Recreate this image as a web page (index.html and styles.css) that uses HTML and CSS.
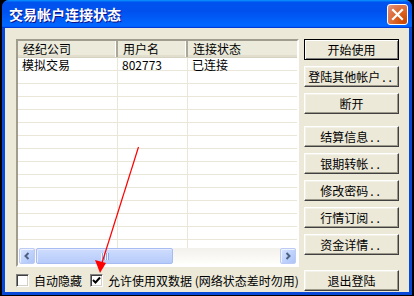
FILE: index.html
```html
<!DOCTYPE html>
<html lang="zh-CN">
<head>
  <meta charset="UTF-8">
  <title>交易帐户连接状态</title>
  <link rel="stylesheet" href="styles.css">
</head>
<body>
  <div class="window">
    <div class="titlebar">
      <span class="title">交易帐户连接状态</span>
      <span class="close-btn">
        <svg width="13" height="13" viewBox="0 0 13 13"><path d="M2 2 L11 11 M11 2 L2 11" stroke="#fff" stroke-width="2.2" stroke-linecap="square"/></svg>
      </span>
    </div>
    <div class="client">
      <div class="list">
        <div class="list-head">
          <div class="hcell">经纪公司</div>
          <div class="hcell">用户名</div>
          <div class="hcell last">连接状态</div>
        </div>
        <div class="list-body">
          <div class="row"><div class="cell">模拟交易</div><div class="cell">802773</div><div class="cell">已连接</div></div>
          <div class="row"><div class="cell"></div><div class="cell"></div><div class="cell"></div></div>
          <div class="row"><div class="cell"></div><div class="cell"></div><div class="cell"></div></div>
          <div class="row"><div class="cell"></div><div class="cell"></div><div class="cell"></div></div>
          <div class="row"><div class="cell"></div><div class="cell"></div><div class="cell"></div></div>
          <div class="row"><div class="cell"></div><div class="cell"></div><div class="cell"></div></div>
          <div class="row"><div class="cell"></div><div class="cell"></div><div class="cell"></div></div>
          <div class="row"><div class="cell"></div><div class="cell"></div><div class="cell"></div></div>
          <div class="row"><div class="cell"></div><div class="cell"></div><div class="cell"></div></div>
          <div class="row"><div class="cell"></div><div class="cell"></div><div class="cell"></div></div>
          <div class="row"><div class="cell"></div><div class="cell"></div><div class="cell"></div></div>
          <div class="row"><div class="cell"></div><div class="cell"></div><div class="cell"></div></div>
          <div class="row"><div class="cell"></div><div class="cell"></div><div class="cell"></div></div>
          <div class="row"><div class="cell"></div><div class="cell"></div><div class="cell"></div></div>
          <div class="row"><div class="cell"></div><div class="cell"></div><div class="cell"></div></div>
        </div>
        <div class="hscroll">
          <div class="sb-btn">
            <svg width="8" height="8" viewBox="0 0 8 8"><path d="M5.5 1 L2.5 4 L5.5 7" fill="none" stroke="#4d6185" stroke-width="2"/></svg>
          </div>
          <div class="sb-track">
            <div class="sb-thumb"><span class="grip"></span></div>
          </div>
          <div class="sb-btn">
            <svg width="8" height="8" viewBox="0 0 8 8"><path d="M2.5 1 L5.5 4 L2.5 7" fill="none" stroke="#4d6185" stroke-width="2"/></svg>
          </div>
        </div>
      </div>

      <div class="btn-col">
        <div class="btn btn-default">开始使用</div>
        <div class="btn">登陆其他帐户<span class="dots">..</span></div>
        <div class="btn">断开</div>
        <div class="btn group-start">结算信息<span class="dots">..</span></div>
        <div class="btn">银期转帐<span class="dots">..</span></div>
        <div class="btn">修改密码<span class="dots">..</span></div>
        <div class="btn">行情订阅<span class="dots">..</span></div>
        <div class="btn">资金详情<span class="dots">..</span></div>
      </div>

      <div class="options">
        <label class="check"><span class="box"></span>自动隐藏</label>
        <label class="check"><span class="box checked">
          <svg width="9" height="9" viewBox="0 0 9 9"><path d="M1 4 L3.5 6.5 L8 1.5" fill="none" stroke="#000" stroke-width="2"/></svg>
        </span>允许使用双数据 (网络状态差时勿用)</label>
      </div>
      <div class="btn">退出登陆</div>
    </div>
  </div>

  <svg class="pointer" width="414" height="296" viewBox="0 0 414 296">
    <line x1="138.5" y1="147" x2="101" y2="266" stroke="#ff0000" stroke-width="1.2"/>
    <polygon points="100,273 95,260 106,263" fill="#ff0000"/>
  </svg>
</body>
</html>
```

FILE: styles.css
```css
/* Base */
* {
  margin: 0;
  padding: 0;
  box-sizing: border-box;
}

body {
  width: 414px;
  height: 296px;
  background-color: #000;
  font-family: "Noto Sans CJK SC", "Liberation Sans", sans-serif;
  font-size: 12px;
  color: #000;
  overflow: hidden;
  position: relative;
}

/* Window frame */
.window {
  margin-left: 2px;
  width: 410px;
  height: 295px;
  display: flex;
  flex-direction: column;
  background-color: #0848d8;
  border-radius: 7px 7px 0 0;
  overflow: hidden;
}

.titlebar {
  height: 28px;
  display: flex;
  align-items: center;
  justify-content: space-between;
  padding: 0 4px 0 7px;
  background: linear-gradient(180deg, #0997ff, #0053ee 8%, #0050ee 40%, #0066ff 88%, #0066ff 93%, #005bff 95%, #003dd7 96%, #003dd7);
}

.title {
  color: #fff;
  font-size: 14px;
  font-weight: bold;
  line-height: 16px;
  text-shadow: 1px 1px #0f1089;
}

.close-btn {
  width: 21px;
  height: 21px;
  display: flex;
  align-items: center;
  justify-content: center;
  border: 1px solid #fff;
  border-radius: 3px;
  background: radial-gradient(circle at 85% 85%, #cc4600 0, #dc6527 45%, #e08062 80%, #eba48a 100%);
}

/* Client area */
.client {
  flex: 1;
  margin: 0 3px 3px;
  background-color: #ece9d8;
  display: grid;
  grid-template-columns: 283px 95px;
  grid-template-rows: 228px 21px;
  column-gap: 5px;
  row-gap: 3px;
  padding: 11px 10px 0 11px;
}

/* List view */
.list {
  display: flex;
  flex-direction: column;
  background-color: #fff;
  border: 2px solid;
  border-color: #a09d8f #fff #fff #a09d8f;
  overflow: hidden;
}

.list-head {
  display: grid;
  grid-template-columns: 100px 70px 1fr;
  height: 17px;
  background-color: #ebeadb;
  border-bottom: 1px solid #d6d2c2;
  box-shadow: 0 -2px 0 #e2decd inset;
}

.hcell {
  line-height: 16px;
  padding-left: 5px;
  border-right: 2px solid;
  border-color: #aca899;
  box-shadow: -1px 0 0 #fff inset;
}

.hcell.last {
  border-right: none;
  box-shadow: none;
}

.list-body {
  flex: 1;
  overflow: hidden;
}

.row {
  display: grid;
  grid-template-columns: 100px 70px 1fr;
  height: 13px;
  box-shadow: inset 0 -1px 0 #ebe7d8;
}

.cell {
  height: 13px;
  line-height: 13px;
  padding-left: 4px;
  box-shadow: inset -1px 0 0 #ebe7d8;
  white-space: nowrap;
}

.cell:last-child {
  box-shadow: none;
}

/* Horizontal scrollbar */
.hscroll {
  height: 16px;
  display: flex;
  margin: 0 1px 1px;
  background: linear-gradient(180deg, #f3f1ec, #fefefb);
}

.sb-btn {
  width: 16px;
  height: 16px;
  display: flex;
  align-items: center;
  justify-content: center;
  border: 1px solid #bbcbf5;
  border-radius: 2px;
  background: linear-gradient(135deg, #d8e4fd, #bcd0fb 60%, #aec4f7);
  box-shadow: inset 1px 1px #eef3fe;
}

.sb-track {
  flex: 1;
  display: flex;
  padding-left: 1px;
}

.sb-thumb {
  width: 137px;
  height: 16px;
  display: flex;
  align-items: center;
  justify-content: center;
  border: 1px solid #a6bcf2;
  border-radius: 2px;
  background: linear-gradient(180deg, #cedcfc, #c2d4fc 50%, #b7cbf9);
  box-shadow: inset 1px 1px #e4ecfe;
}

.grip {
  width: 8px;
  height: 7px;
  background: repeating-linear-gradient(90deg, #eef3fe 0 1px, #8ca8e8 1px 2px);
}

/* Buttons */
.btn-col {
  display: flex;
  flex-direction: column;
  gap: 6px;
}

.btn {
  height: 21px;
  display: flex;
  align-items: center;
  justify-content: center;
  line-height: 14px;
  white-space: nowrap;
  background-color: #ece9d8;
  border: 1px solid;
  border-color: #fff #404040 #404040 #fff;
  box-shadow: inset -1px -1px #9d9a8c, inset 1px 1px #f4f2e8;
}

.btn-default {
  border-color: #000;
  box-shadow: inset 1px 1px #fff, inset -1px -1px #808080;
}

.group-start {
  margin-top: 6px;
}

.dots {
  letter-spacing: 3px;
  margin-left: 2px;
}

/* Options row */
.options {
  display: flex;
  align-items: center;
  gap: 8px;
}

.check {
  display: flex;
  align-items: center;
  gap: 5px;
  line-height: 14px;
  white-space: nowrap;
}

.box {
  width: 13px;
  height: 13px;
  background-color: #fff;
  border: 1px solid;
  border-color: #808080 #fff #fff #808080;
  box-shadow: inset 1px 1px #404040, inset -1px -1px #d4d0c8;
  display: flex;
  align-items: center;
  justify-content: center;
}

/* Red annotation arrow */
.pointer {
  position: absolute;
  left: 0;
  top: 0;
  pointer-events: none;
}
```
